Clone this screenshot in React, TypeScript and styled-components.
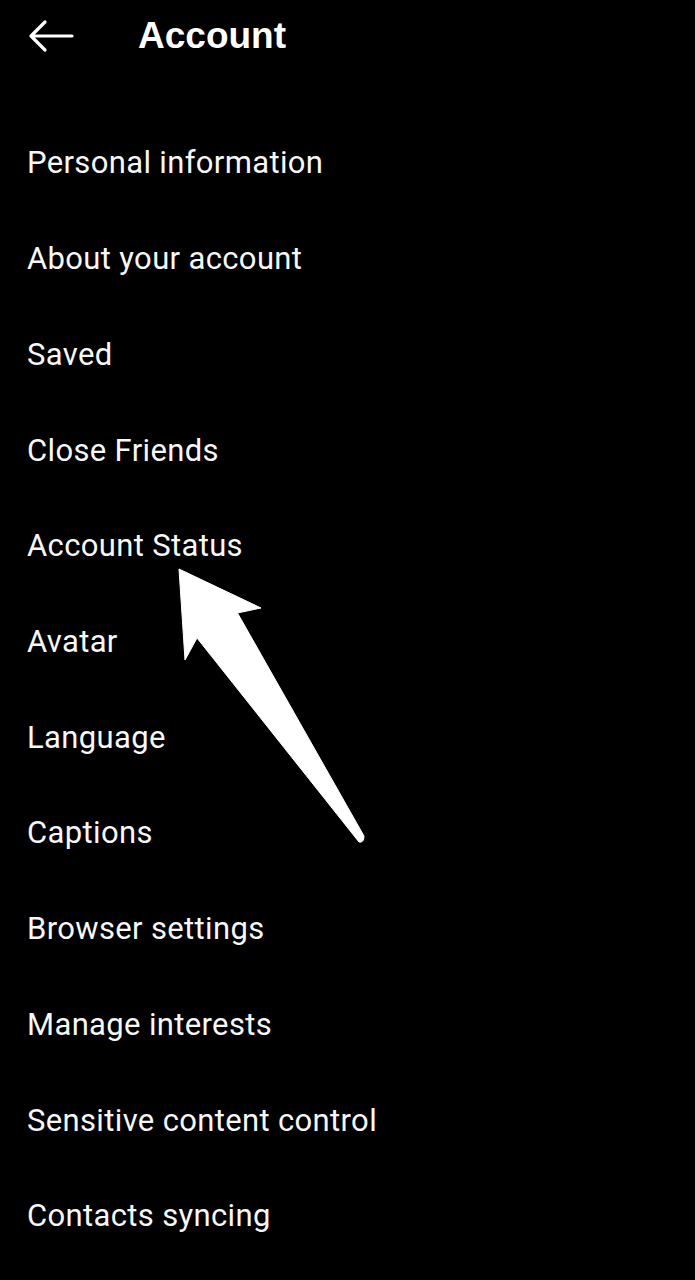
import React from "react";
import styled, { createGlobalStyle } from "styled-components";

const Global = createGlobalStyle`
  html, body { margin: 0; padding: 0; background: #000; }
  body { font-family: Roboto, "Liberation Sans", sans-serif; -webkit-font-smoothing: antialiased; }
`;

const Screen = styled.div`
  position: relative;
  width: 695px;
  height: 1280px;
  background: #000;
  color: #fff;
  overflow: hidden;
`;

const Header = styled.header`
  display: flex;
  align-items: center;
  height: 72px;
  padding-left: 28px;
`;

const BackButton = styled.button`
  display: flex;
  align-items: center;
  justify-content: center;
  width: 46px;
  height: 46px;
  padding: 0;
  background: none;
  border: none;
  color: #fff;
`;

const Title = styled.h1`
  margin: 0 0 0 64px;
  font-family: "Liberation Sans", Arial, sans-serif;
  font-size: 37px;
  font-weight: 700;
  letter-spacing: 0;
`;

const List = styled.ul`
  list-style: none;
  margin: 0;
  padding: 43px 0 0 0;
`;

const Item = styled.li`
  display: flex;
  align-items: center;
  height: 95.73px;
  padding-left: 27px;
  font-size: 31px;
  font-weight: 400;
  letter-spacing: 0.35px;
  color: #f7f7f7;
`;

const Pointer = styled.svg`
  position: absolute;
  left: 0;
  top: 0;
  pointer-events: none;
`;

const items = [
  "Personal information",
  "About your account",
  "Saved",
  "Close Friends",
  "Account Status",
  "Avatar",
  "Language",
  "Captions",
  "Browser settings",
  "Manage interests",
  "Sensitive content control",
  "Contacts syncing",
];

export default function App() {
  return (
    <Screen>
      <Global />
      <Header>
        <BackButton aria-label="Back">
          <svg width="46" height="34" viewBox="0 0 46 34" fill="none" stroke="#fff" strokeWidth="3.2" strokeLinecap="round" strokeLinejoin="round">
            <path d="M44 17H3M17 3L3 17l14 14" />
          </svg>
        </BackButton>
        <Title>Account</Title>
      </Header>
      <List>
        {items.map((t) => (
          <Item key={t}>{t}</Item>
        ))}
      </List>
      <Pointer width="695" height="1280" viewBox="0 0 695 1280">
        <path
          d="M179 569 L261 608 L237.5 613 L364 836 Q364 843 359 842 L197 638 L185 660 Z"
          fill="#fff"
          stroke="#fff"
          strokeWidth="1"
          strokeLinejoin="round"
        />
      </Pointer>
    </Screen>
  );
}
